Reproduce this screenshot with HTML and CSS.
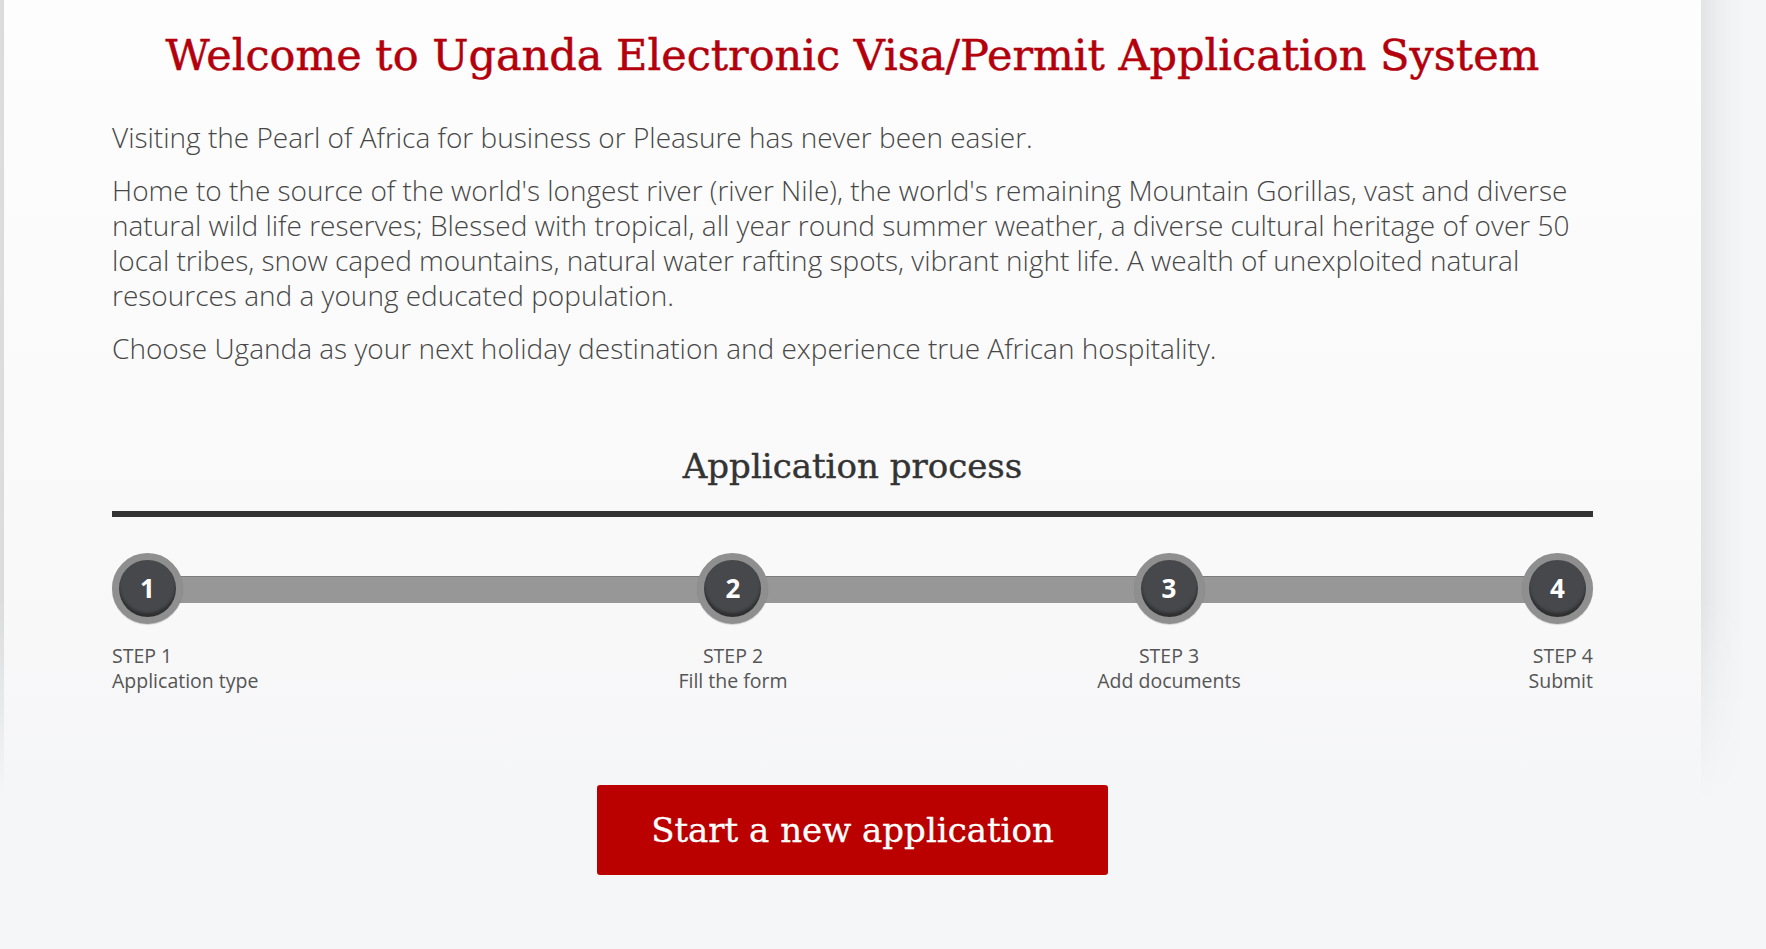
FILE: index.html
```html
<!DOCTYPE html>
<html lang="en">
<head>
<meta charset="utf-8">
<title>Uganda Electronic Visa/Permit Application System</title>
<link rel="stylesheet" href="styles.css">
</head>
<body>
<main class="panel">
  <h1 class="title">Welcome to Uganda Electronic Visa/Permit Application System</h1>
  <div class="intro">
    <p>Visiting the Pearl of Africa for business or Pleasure has never been easier.</p>
    <p>Home to the source of the world's longest river (river Nile), the world's remaining Mountain Gorillas, vast and diverse natural wild life reserves; Blessed with tropical, all year round summer weather, a diverse cultural heritage of over 50 local tribes, snow caped mountains, natural water rafting spots, vibrant night life. A wealth of unexploited natural resources and a young educated population.</p>
    <p>Choose Uganda as your next holiday destination and experience true African hospitality.</p>
  </div>
  <h2 class="process-title">Application process</h2>
  <hr class="rule">
  <ol class="steps">
    <li class="step step-start">
      <span class="dot">1</span>
      <span class="label">STEP 1<br>Application type</span>
    </li>
    <li class="step step-mid">
      <span class="dot">2</span>
      <span class="label">STEP 2<br>Fill the form</span>
    </li>
    <li class="step step-mid">
      <span class="dot">3</span>
      <span class="label">STEP 3<br>Add documents</span>
    </li>
    <li class="step step-end">
      <span class="dot">4</span>
      <span class="label">STEP 4<br>Submit</span>
    </li>
  </ol>
  <div class="actions">
    <a class="start-btn" href="#">Start a new application</a>
  </div>
</main>
</body>
</html>
```

FILE: styles.css
```css
html, body {
  margin: 0;
  padding: 0;
}
body {
  background: #f5f6f8;
  min-height: 949px;
  overflow: hidden;
}
.panel {
  position: relative;
  display: block;
  box-sizing: border-box;
  width: 1697px;
  margin-left: 4px;
  min-height: 949px;
  padding: 28px 108px 40px;
  background: linear-gradient(to bottom, #fdfdfd 0, #fafafa 400px, #f8f8f9 650px, #f5f6f8 790px);
}
.panel::before,
.panel::after {
  content: "";
  position: absolute;
  top: 0;
  width: 44px;
  height: 800px;
  -webkit-mask-image: linear-gradient(to bottom, #000 0, #000 600px, transparent 800px);
  mask-image: linear-gradient(to bottom, #000 0, #000 600px, transparent 800px);
  pointer-events: none;
}
.panel::after {
  left: 100%;
  background: linear-gradient(to right, rgba(0,0,0,0.075), rgba(0,0,0,0.03) 40%, rgba(0,0,0,0));
}
.panel::before {
  right: 100%;
  background: linear-gradient(to left, rgba(0,0,0,0.11), rgba(0,0,0,0.05) 60%, rgba(0,0,0,0));
}
.title {
  margin: 0;
  font-family: "DejaVu Serif", serif;
  font-weight: normal;
  font-size: 43px;
  line-height: 54px;
  color: #b3000c;
  -webkit-text-stroke: 0.5px #b3000c;
  text-align: center;
}
.intro {
  margin-top: 38px;
  font-family: "Open Sans", "Liberation Sans", sans-serif;
  font-weight: 300;
  font-size: 28px;
  line-height: 35px;
  color: #474747;
}
.intro p {
  margin: 0 0 18px;
}
.intro p:last-child {
  margin-bottom: 0;
}
.process-title {
  margin: 80px 0 0;
  font-family: "DejaVu Serif", serif;
  font-weight: normal;
  font-size: 34px;
  line-height: 40px;
  color: #333;
  -webkit-text-stroke: 0.4px #333;
  text-align: center;
}
.rule {
  margin: 25px 0 0;
  border: 0;
  height: 6px;
  background: #333;
}
.steps {
  position: relative;
  list-style: none;
  margin: 36px 0 0;
  padding: 0;
  display: grid;
  grid-template-columns: 421px 400px 472px 188px;
  font-family: "Open Sans", "Liberation Sans", sans-serif;
  font-size: 19.5px;
  line-height: 25px;
  color: #555;
}
.steps::before {
  content: "";
  position: absolute;
  left: 35px;
  right: 35px;
  top: 23px;
  height: 27px;
  background: #979797;
  border-top: 1px solid #7d7d7d;
  box-sizing: border-box;
}
.step {
  position: relative;
  display: flex;
  flex-direction: column;
}
.step-start {
  justify-self: start;
  align-items: flex-start;
  text-align: left;
}
.step-mid {
  justify-self: center;
  align-items: center;
  text-align: center;
}
.step-end {
  justify-self: end;
  align-items: flex-end;
  text-align: right;
}
.dot {
  box-sizing: border-box;
  width: 71px;
  height: 71px;
  border-radius: 50%;
  border: 7px solid #8f8f8f;
  background: #47484b;
  box-shadow: inset 0 -4px 3px rgba(0,0,0,0.35), 0 1px 1px rgba(0,0,0,0.15);
  color: #fff;
  font-weight: 700;
  font-size: 26px;
  line-height: 57px;
  text-align: center;
}
.label {
  margin-top: 19px;
  white-space: nowrap;
}
.actions {
  display: flex;
  justify-content: center;
  margin-top: 92px;
}
.start-btn {
  display: flex;
  align-items: center;
  justify-content: center;
  box-sizing: border-box;
  width: 511px;
  height: 90px;
  border-radius: 3px;
  background: #bb0000;
  color: #fff;
  text-decoration: none;
  font-family: "DejaVu Serif", serif;
  font-size: 34px;
  -webkit-text-stroke: 0.3px #fff;
}
```
